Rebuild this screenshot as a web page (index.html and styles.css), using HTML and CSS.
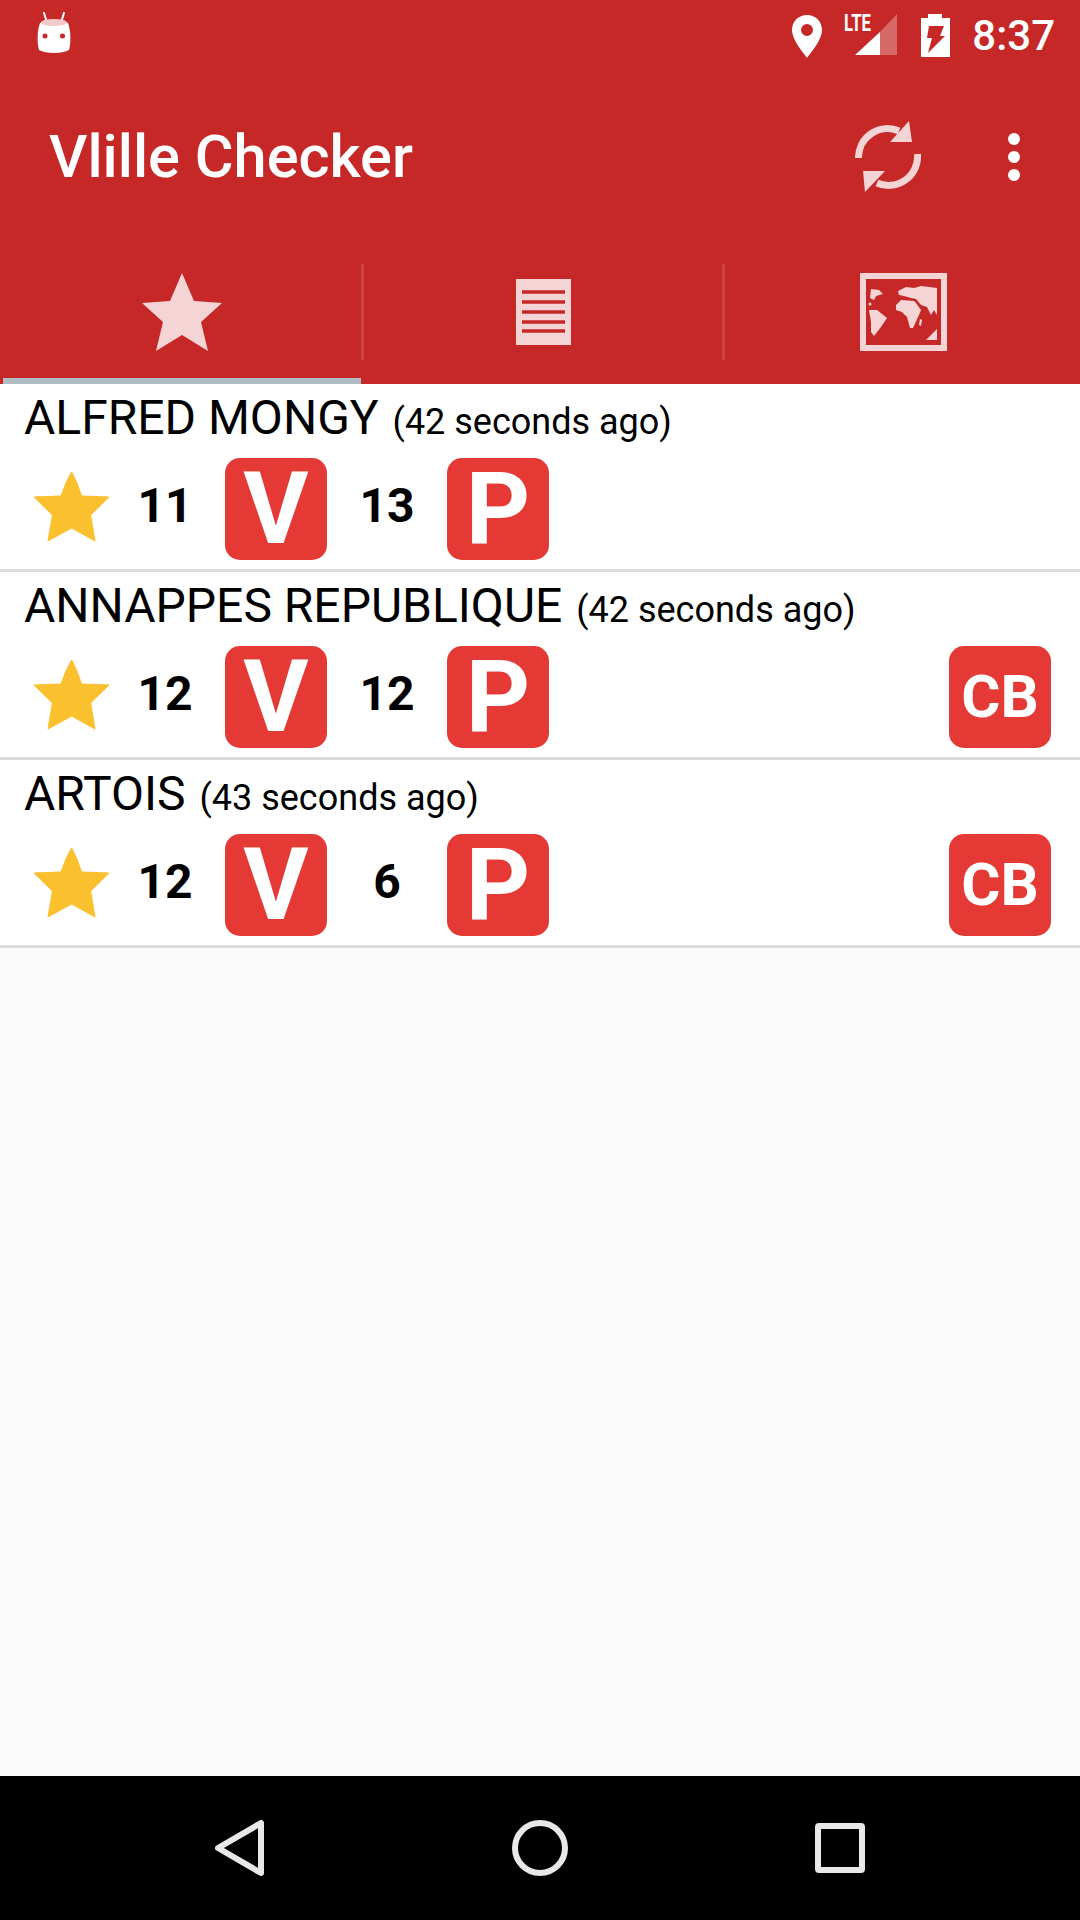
FILE: index.html
```html
<!DOCTYPE html>
<html lang="en">
<head>
  <meta charset="UTF-8" />
  <meta name="viewport" content="width=device-width, initial-scale=1.0" />
  <title>Vlille Checker</title>

  <link rel="stylesheet" href="styles.css">
</head>
<body>
  <div class="app">
    <header class="header">
      <div class="status-bar">
        <svg class="robot" viewBox="0 0 34 42" width="34" height="42">
          <path d="M7 1l2.500 8M27 1l-2.500 8" stroke="#fff" stroke-width="2" stroke-linecap="round" fill="none"/>
          <path d="M3 11c8-3 20-3 28 0 3 8 3 20 1 27-7 4-23 4-30 0-2-7-2-19 1-27z" fill="#fff"/>
          <ellipse cx="17" cy="10.500" rx="13" ry="3.500" fill="#f3c9c9"/>
          <circle cx="8" cy="24" r="2.500" fill="#c62828"/>
          <circle cx="25.500" cy="24" r="2.500" fill="#c62828"/>
        </svg>
        <div class="status-right">
          <svg class="pin" viewBox="0 0 30 43" width="30" height="43">
            <path fill-rule="evenodd" fill="#fff" d="M15 0c8.500 0 15 6.500 15 15 0 9-9 20-15 28C9 35 0 24 0 15 0 6.500 6.500 0 15 0zm0 9a6 6 0 1 0 0 12 6 6 0 0 0 0-12z"/>
          </svg>
          <svg class="signal" viewBox="0 -6 53 50" width="53" height="50">
            <text x="0" y="18" class="lte" textLength="27" lengthAdjust="spacingAndGlyphs">LTE</text>
            <path d="M11 42L36 19v23z" fill="#fff"/>
            <path d="M36 19L53 1v41H36z" fill="#fff" fill-opacity=".3"/>
          </svg>
          <svg class="battery" viewBox="0 0 29 43" width="29" height="43">
            <path fill="#fff" d="M7 0h14v4h8v39H0V4h7z"/>
            <path fill="#c62828" d="M8 12h15l-4 10h5L7 39l4-15H6z"/>
          </svg>
          <span class="clock">8:37</span>
        </div>
      </div>

      <div class="toolbar">
        <h1 class="app-title">Vlille Checker</h1>
        <svg class="refresh" viewBox="0 0 66 72" width="66" height="72">
          <g fill="none" stroke="#fff" stroke-opacity=".8" stroke-width="7">
            <path d="M3.500 37A29 29 0 0 1 44 10"/>
            <path d="M62.500 33A29 29 0 0 1 22 62"/>
          </g>
          <path d="M54 0l3 21H35z" fill="#fff" fill-opacity=".8"/>
          <path d="M10 71L8 50h22z" fill="#fff" fill-opacity=".8"/>
        </svg>
        <div class="overflow">
          <span class="dot"></span>
          <span class="dot"></span>
          <span class="dot"></span>
        </div>
      </div>

      <div class="tabs">
        <div class="tab">
          <div class="tab-body tab-first">
            <svg viewBox="0 0 80 78" width="80" height="78">
              <path d="M40 0l12 28 28 2-21 19 7 29-26-16-26 16 7-29L0 30l28-2z" fill="#fff" fill-opacity=".8"/>
            </svg>
          </div>
          <div class="tab-line"></div>
        </div>
        <div class="tab">
          <div class="tab-body">
            <svg viewBox="0 0 55 66" width="55" height="66">
              <rect width="55" height="66" fill="#fff" fill-opacity=".8"/>
              <path d="M6 13h43M6 23h43M6 33h43M6 43h43M6 52h43" stroke="#c62828" stroke-width="3.500"/>
            </svg>
          </div>
        </div>
        <div class="tab">
          <div class="tab-body tab-last">
            <svg viewBox="0 0 87 78" width="87" height="78">
              <rect x="3" y="3" width="81" height="72" fill="none" stroke="#fff" stroke-opacity=".8" stroke-width="6"/>
              <g fill="#fff" fill-opacity=".8">
                <path d="M11 16l8 1 4 4-7 2-2 4-4-2z"/>
                <circle cx="10" cy="31" r="1.500"/>
                <path d="M9 37h8l10 8-6 9-7 9-3-4V49z"/>
                <path d="M38 18l8-4 8 1 7-2 16 2v27l-3-5-3 5-4-8-6-2-5-6-5-1-7-2-5-1z"/>
                <path d="M41 27l13 1 2 2 5 7-2 5-6 13h-3l-3-11-5-5-6-2v-5z"/>
                <path d="M60 46l2 1-1 6-2-1z"/>
                <path d="M66 67h11V56z"/>
              </g>
            </svg>
          </div>
        </div>
      </div>
    </header>

    <main class="stations">
      <div class="station">
        <div class="station-title">ALFRED MONGY <small>(42 seconds ago)</small></div>
        <div class="station-info">
          <svg class="fav" viewBox="0 0 77 72" width="77" height="72"><path d="M38.600 1Q44 10 48.500 25L76 26 57.700 44 62 70 38.600 57 15 70 19.400 44 1 26 28 25Q33 10 38.600 1z" fill="#fbc02d" stroke="#fbc02d" stroke-width="1" stroke-linejoin="round"/></svg>
          <span class="count count-bikes">11</span>
          <span class="badge">V</span>
          <span class="count">13</span>
          <span class="badge">P</span>
        </div>
      </div>
      <div class="station">
        <div class="station-title">ANNAPPES REPUBLIQUE <small>(42 seconds ago)</small></div>
        <div class="station-info">
          <svg class="fav" viewBox="0 0 77 72" width="77" height="72"><path d="M38.600 1Q44 10 48.500 25L76 26 57.700 44 62 70 38.600 57 15 70 19.400 44 1 26 28 25Q33 10 38.600 1z" fill="#fbc02d" stroke="#fbc02d" stroke-width="1" stroke-linejoin="round"/></svg>
          <span class="count count-bikes">12</span>
          <span class="badge">V</span>
          <span class="count">12</span>
          <span class="badge">P</span>
          <span class="badge badge-cb">CB</span>
        </div>
      </div>
      <div class="station">
        <div class="station-title">ARTOIS <small>(43 seconds ago)</small></div>
        <div class="station-info">
          <svg class="fav" viewBox="0 0 77 72" width="77" height="72"><path d="M38.600 1Q44 10 48.500 25L76 26 57.700 44 62 70 38.600 57 15 70 19.400 44 1 26 28 25Q33 10 38.600 1z" fill="#fbc02d" stroke="#fbc02d" stroke-width="1" stroke-linejoin="round"/></svg>
          <span class="count count-bikes">12</span>
          <span class="badge">V</span>
          <span class="count">6</span>
          <span class="badge">P</span>
          <span class="badge badge-cb">CB</span>
        </div>
      </div>
    </main>

    <nav class="nav-bar">
      <svg viewBox="0 0 50 56" width="50" height="56">
        <path d="M46 3v50L3 28z" fill="none" stroke="#e8e8e8" stroke-width="6" stroke-linejoin="round"/>
      </svg>
      <svg viewBox="0 0 56 56" width="56" height="56">
        <circle cx="28" cy="28" r="25" fill="none" stroke="#e8e8e8" stroke-width="6"/>
      </svg>
      <svg viewBox="0 0 50 50" width="50" height="50">
        <rect x="3" y="3" width="44" height="44" rx="1" fill="none" stroke="#e8e8e8" stroke-width="6"/>
      </svg>
    </nav>
  </div>
</body>
</html>
```

FILE: styles.css
```css
body {
  font-family: Roboto, sans-serif;
  margin: 0;
  padding: 0;
  background: #fafafa;
  color: black;
}
.app {
  display: flex;
  flex-direction: column;
  height: 1920px;
}
.header {
  background-color: #c62828;
  color: white;
}
.status-bar {
  display: flex;
  align-items: flex-start;
  justify-content: space-between;
  height: 64px;
  padding: 12px 25px 0 37px;
  box-sizing: border-box;
}
.status-right {
  display: flex;
  align-items: flex-start;
}
.pin {
  margin: 3px 22px 0 0;
}
.signal {
  margin: -5px 24px 0 0;
}
.lte {
  font-family: Roboto, sans-serif;
  font-size: 24px;
  font-weight: 700;
  fill: white;
}
.battery {
  margin: 2px 22px 0 0;
}
.clock {
  font-size: 42px;
  font-weight: 500;
  line-height: 47px;
}
.toolbar {
  display: flex;
  align-items: center;
  height: 186px;
  margin-bottom: 14px;
  padding: 0 60px 0 49px;
}
.app-title {
  flex: 1;
  margin: 0;
  font-size: 59.5px;
  font-weight: 500;
}
.refresh {
  margin-right: 87px;
}
.overflow {
  display: flex;
  flex-direction: column;
  gap: 6px;
}
.dot {
  width: 12px;
  height: 12px;
  border-radius: 50%;
  background: white;
}
.tabs {
  display: grid;
  grid-template-columns: 364px 361px 1fr;
  height: 120px;
}
.tab-body {
  display: flex;
  align-items: center;
  justify-content: center;
  height: 96px;
  border-right: 3px solid rgba(255, 255, 255, 0.12);
}
.tab-first {
  padding-left: 2px;
}
.tab-last {
  padding-left: 2px;
  border-right: none;
}
.tab-line {
  height: 6px;
  margin: 18px 3px 0;
  background: #b0bec5;
}
.stations {
  flex: 1;
}
.station {
  height: 188px;
  box-sizing: border-box;
  background: white;
  border-bottom: 3px solid #dcdcdc;
}
.station-title {
  height: 74px;
  padding-left: 24px;
  font-size: 48px;
  line-height: 68px;
  white-space: nowrap;
}
.station-title small {
  margin-left: 2px;
  font-size: 36px;
}
.station-info {
  display: flex;
  align-items: center;
  padding: 0 29px 0 33px;
}
.fav {
  flex: none;
  margin-bottom: 5px;
}
.count {
  width: 120px;
  margin-bottom: 8px;
  text-align: center;
  font-size: 48px;
  font-weight: 700;
}
.count-bikes {
  width: 110px;
  margin-right: 5px;
}
.badge {
  display: flex;
  align-items: center;
  justify-content: center;
  width: 102px;
  height: 102px;
  border-radius: 15px;
  background: #e53935;
  color: white;
  font-size: 100px;
  font-weight: 700;
  line-height: 1;
}
.badge-cb {
  margin-left: auto;
  font-size: 60px;
}
.nav-bar {
  display: grid;
  grid-template-columns: repeat(3, 1fr);
  align-items: center;
  justify-items: center;
  height: 144px;
  padding: 0 90px;
  box-sizing: border-box;
  background: black;
}
```
